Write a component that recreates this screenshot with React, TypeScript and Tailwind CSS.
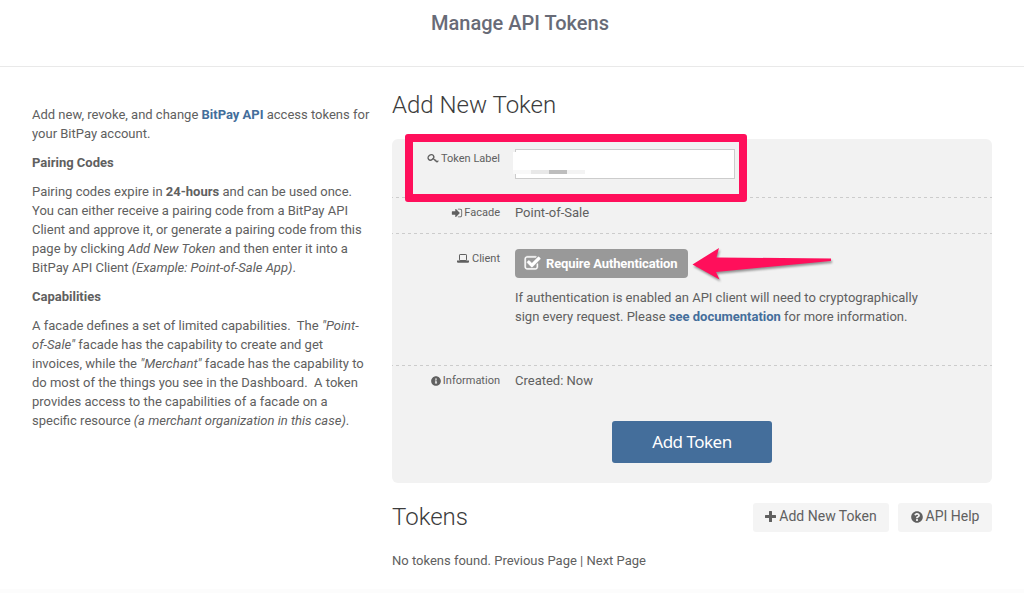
import React from "react";
import { FaInfoCircle, FaQuestionCircle } from "react-icons/fa";

const KeyIcon = () => (
  <svg className="mr-[2px] h-[11px] w-[12px]" viewBox="0 0 12 11" fill="none" stroke="currentColor">
    <ellipse cx="3.9" cy="4.3" rx="2.5" ry="3.1" transform="rotate(50 3.9 4.3)" strokeWidth="1.3" />
    <path d="M5.8 5.2 10.4 9.2M7.8 8.2 9.2 6.8M9.6 9.4 11.400 7.600" strokeWidth="1.200" />
  </svg>
);

const SignInIcon = () => (
  <svg className="mr-[1px] h-[12px] w-[12px]" viewBox="0 0 1792 1792" fill="currentColor">
    <path d="M1312 896q0 26-19 45l-544 544q-19 19-45 19t-45-19-19-45v-288H192q-26 0-45-19t-19-45V704q0-26 19-45t45-19h448V352q0-26 19-45t45-19 45 19l544 544q19 19 19 45zm352-352v704q0 119-84.5 203.5T1376 1536h-320q-13 0-22.5-9.5T1024 1504q0-4-1-20t-.5-26.5 3-23.5 10-19.5 20.5-6.5h320q66 0 113-47t47-113V544q0-66-47-113t-113-47h-312l-11.5-1-11.5-3-8-5.5-7-9-2-13.5q0-4-1-20t-.5-26.5 3-23.5 10-19.5 20.5-6.5h320q119 0 203.5 84.5T1664 544z" />
  </svg>
);

const LaptopIcon = () => (
  <svg className="mr-[3px] h-[9px] w-[12px]" viewBox="0 0 12 9">
    <rect x="2.5" y="0.5" width="7" height="6" rx="0.6" fill="none" stroke="currentColor" />
    <path d="M0 6.600h12v.9q0 1.200-1 1.200H1q-1 0-1-1.200z" fill="currentColor" />
  </svg>
);

const CheckIcon = () => (
  <svg className="mr-[5px] h-[17px] w-[17px]" viewBox="0 0 1792 1792" fill="currentColor">
    <path stroke="currentColor" strokeWidth="40" d="M1472 930v318q0 119-84.5 203.5T1184 1536H352q-119 0-203.5-84.5T64 1248V416q0-119 84.5-203.5T352 128h832q63 0 117 25 15 7 18 23 3 17-9 29l-49 49q-10 10-23 10-3 0-9-2-23-6-45-6H352q-66 0-113 47t-47 113v832q0 66 47 113t113 47h832q66 0 113-47t47-113v-254q0-13 9-22l64-64q10-10 23-10 6 0 12 3 20 8 20 29zm231-489l-814 814q-24 24-57 24t-57-24l-430-430q-24-24-24-57t24-57l110-110q24-24 57-24t57 24l263 263 647-647q24-24 57-24t57 24l110 110q24 24 24 57t-24 57z" />
  </svg>
);

const PlusIcon = () => (
  <svg className="mr-[3px] h-[11px] w-[11px]" viewBox="0 0 11 11" fill="currentColor">
    <path d="M4.6 0h1.8q.6 0 .6.6V4h3.4q.6 0 .6.6v1.8q0 .6-.6.6H7v3.4q0 .6-.6.6H4.6q-.6 0-.6-.6V7H.6Q0 7 0 6.4V4.6Q0 4 .6 4H4V.6Q4 0 4.6 0z" />
  </svg>
);

function Row({ icon, label, className, children }: { icon: React.ReactNode; label: string; className: string; children: React.ReactNode }) {
  return (
    <div className={`flex ${className}`}>
      <div className="mr-[15px] flex h-[19px] w-[108px] shrink-0 items-center justify-end text-[11px]">
        {icon}
        <span>{label}</span>
      </div>
      {children}
    </div>
  );
}

const Divider = () => (
  <div className="h-px w-full bg-[repeating-linear-gradient(90deg,#cccccc_0px,#cccccc_1px,transparent_1px,transparent_4px,#cccccc_4px,#cccccc_6px)]" />
);

export default function App() {
  return (
    <div className="flex h-[593px] w-[1024px] flex-col overflow-hidden bg-white font-['Roboto',sans-serif] text-[13px] leading-[19px] text-[#606060]">
      <header className="flex h-[67px] shrink-0 justify-center border-b border-[#e9e9e9] pt-[11px] pl-4">
        <h1 className="text-[20px] leading-[24px] font-medium whitespace-nowrap text-[#686b77]">Manage API Tokens</h1>
      </header>
      <div className="flex h-[522px] shrink-0">
        <aside className="flex w-[392px] shrink-0 flex-col gap-[10px] pt-[38px] pl-8 whitespace-nowrap">
          <p>
            Add new, revoke, and change <b className="font-bold text-[#446e9b]">BitPay API</b> access tokens for
            <br />
            your BitPay account.
          </p>
          <h3 className="font-bold">Pairing Codes</h3>
          <p>
            Pairing codes expire in <b>24-hours</b> and can be used once.
            <br />
            You can either receive a pairing code from a BitPay API
            <br />
            Client and approve it, or generate a pairing code from this
            <br />
            page by clicking <i>Add New Token</i> and then enter it into a
            <br />
            BitPay API Client <i>(Example: Point-of-Sale App)</i>.
          </p>
          <h3 className="font-bold">Capabilities</h3>
          <p>
            A facade defines a set of limited capabilities.&nbsp; The <i>"Point-</i>
            <br />
            <i>of-Sale"</i> facade has the capability to create and get
            <br />
            invoices, while the <i>"Merchant"</i> facade has the capability to
            <br />
            do most of the things you see in the Dashboard.&nbsp; A token
            <br />
            provides access to the capabilities of a facade on a
            <br />
            specific resource <i>(a merchant organization in this case)</i>.
          </p>
        </aside>
        <main className="flex w-[600px] flex-col">
          <h2 className="mt-[24px] mb-[20px] text-[24px] leading-[28px] font-light text-[#3c3c3c]">Add New Token</h2>
          <section className="relative flex h-[344px] shrink-0 flex-col rounded-[6px] bg-[#f2f2f2]">
            <Row icon={<KeyIcon />} label="Token Label" className="h-[58px] pt-[10px]">
              <div className="relative h-[30px] w-[220px] border border-[#cccccc] bg-white">
                <div className="absolute top-[2px] -left-[3px] h-[22px] w-[72px] bg-white">
                  <div className="mt-[18px] flex h-1">
                    <span className="w-[18px] bg-[#f8f8f8]" />
                    <span className="w-[18px] bg-[#e8e8e8]" />
                    <span className="w-[18px] bg-[#bdbdbd]" />
                    <span className="w-[18px] bg-[#f3f3f3]" />
                  </div>
                </div>
              </div>
            </Row>
            <Divider />
            <Row icon={<SignInIcon />} label="Facade" className="h-[35px] pt-[5px]">
              <span>Point-of-Sale</span>
            </Row>
            <Divider />
            <Row icon={<LaptopIcon />} label="Client" className="h-[131px] pt-[15px]">
              <div>
                <button className="flex h-[29px] w-[173px] items-center rounded-[4px] bg-[#999999] pl-[9px] text-[13px] font-bold tracking-[-0.13px] whitespace-nowrap text-white">
                  <CheckIcon />
                  Require Authentication
                </button>
                <p className="mt-[10px] whitespace-nowrap">
                  If authentication is enabled an API client will need to cryptographically
                  <br />
                  sign every request. Please <b className="text-[#446e9b]">see documentation</b> for more information.
                </p>
              </div>
            </Row>
            <Divider />
            <Row icon={<FaInfoCircle className="mr-[2px] size-[10px]" />} label="Information" className="h-[55px] pt-[5px]">
              <span>Created: Now</span>
            </Row>
            <button className="h-[42px] w-[160px] self-center rounded-[3px] bg-[#446e9b] pb-[2px] font-['Noto_Sans',sans-serif] text-[17px] tracking-[-0.5px] text-white">
              Add Token
            </button>
            <div className="absolute top-[-5px] left-[13px] h-[68px] w-[342px] rounded-[3px] border-8 border-[#ff0f5b]" />
            <svg className="absolute top-[106px] left-[298px] h-[40px] w-[148px] drop-shadow-[1px_2px_1px_rgba(0,0,0,0.4)]" viewBox="0 0 148 40">
              <path d="M2.500 19.500 29 3l-2.500 9.500L141 13.500v2.500L26 27l3.500 7.500z" fill="#ff0f5b" />
            </svg>
          </section>
          <div className="mt-[20px] flex">
            <h2 className="flex-1 text-[24px] leading-[28px] font-light text-[#3c3c3c]">Tokens</h2>
            <button className="mr-[9px] flex h-[29px] w-[136px] items-center justify-center rounded-[3px] bg-[#f4f4f4] pb-[2px] text-[14px] whitespace-nowrap">
              <PlusIcon />
              Add New Token
            </button>
            <button className="flex h-[29px] w-[94px] items-center justify-center rounded-[3px] bg-[#f4f4f4] pb-[2px] text-[14px] whitespace-nowrap">
              <FaQuestionCircle className="mr-[3px] size-[12px]" />
              API Help
            </button>
          </div>
          <p className="mt-[19px]">No tokens found. Previous Page | Next Page</p>
        </main>
      </div>
      <footer className="flex-1 bg-[#fcfcfc]" />
    </div>
  );
}
